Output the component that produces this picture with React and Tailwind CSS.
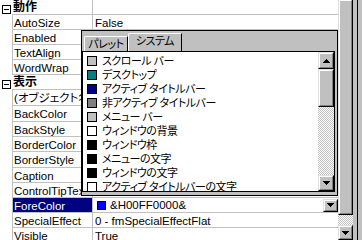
const rows = [
  { group: '動作', h: 'h-[15px]' },
  { name: 'AutoSize', value: 'False', h: 'h-[15px]' },
  { name: 'Enabled', h: 'h-[15px]' },
  { name: 'TextAlign', h: 'h-[15px]' },
  { name: 'WordWrap', h: 'h-[15px]' },
  { group: '表示', h: 'h-[15px]' },
  { name: '(オブジェクト名)', h: 'h-[16px]' },
  { name: 'BackColor', h: 'h-[16px]' },
  { name: 'BackStyle', h: 'h-[15px]' },
  { name: 'BorderColor', h: 'h-[15px]' },
  { name: 'BorderStyle', h: 'h-[16px]' },
  { name: 'Caption', h: 'h-[15px]' },
  { name: 'ControlTipText', h: 'h-[15px]' },
  { name: 'ForeColor', value: '&H00FF0000&', selected: true, h: 'h-[15px]' },
  { name: 'SpecialEffect', value: '0 - fmSpecialEffectFlat', h: 'h-[15px]' },
  { name: 'Visible', value: 'True', h: 'flex-1' },
]

const sysColors = [
  { label: 'スクロール バー', color: 'bg-[#c0c0c0]' },
  { label: 'デスクトップ', color: 'bg-[#008080]' },
  { label: 'アクティブ タイトルバー', color: 'bg-[#000080]' },
  { label: '非アクティブ タイトルバー', color: 'bg-[#808080]' },
  { label: 'メニュー バー', color: 'bg-[#c0c0c0]' },
  { label: 'ウィンドウの背景', color: 'bg-white' },
  { label: 'ウィンドウ枠', color: 'bg-black' },
  { label: 'メニューの文字', color: 'bg-black' },
  { label: 'ウィンドウの文字', color: 'bg-black' },
  { label: 'アクティブ タイトルバーの文字', color: 'bg-white' },
]

function Arrow({ up }) {
  return (
    <svg width="7" height="4" viewBox="0 0 7 4" shapeRendering="crispEdges">
      {up ? (
        <path d="M3 0h1v1h1v1h1v1h1v1H0V3h1V2h1V1h1z" fill="black" />
      ) : (
        <path d="M0 0h7v1H6v1H5v1H4v1H3V3H2V2H1V1H0z" fill="black" />
      )}
    </svg>
  )
}

// win95 style raised box
function Raised({ className = '', children }) {
  return (
    <div className={`border border-t-[#dfdfdf] border-l-[#dfdfdf] border-r-black border-b-black bg-[#c0c0c0] ${className}`}>
      <div className="w-full h-full border border-t-white border-l-white border-r-[#808080] border-b-[#808080] flex items-center justify-center">
        {children}
      </div>
    </div>
  )
}

function Minus() {
  return (
    <div className="w-[9px] h-[9px] border border-black bg-white flex items-center justify-center">
      <div className="w-[5px] h-[1px] bg-black" />
    </div>
  )
}

function Row({ r }) {
  if (r.group) {
    return (
      <div className={`flex shrink-0 ${r.h}`}>
        <div className="w-[12px] flex items-center pl-[2px] pt-[4px]"><Minus /></div>
        <div className="w-[80px] border-b border-[#c0c0c0] pl-[1px] pt-[1px] font-bold text-[12px] leading-[13px]">{r.group}</div>
        <div className="flex-1 border-l border-b border-[#c0c0c0]" />
      </div>
    )
  }
  return (
    <div className={`flex shrink-0 ${r.h}`}>
      <div className="w-[12px]" />
      <div className="w-[81px] border-l border-r border-b border-[#c0c0c0] overflow-hidden whitespace-nowrap">
        <div className={`h-full pl-[1px] pt-[2px] leading-[13px] ${r.selected ? 'bg-[#000080] text-white' : ''}`}>{r.name}</div>
      </div>
      <div className="flex-1 border-b border-[#c0c0c0] flex items-start whitespace-nowrap">
        {r.selected ? (
          <div className="flex items-center w-full h-full pl-[4px]">
            <div className="w-[9px] h-[9px] border border-black bg-[#0000ff]" />
            <span className="ml-[4px] pt-[1px] leading-[13px]">{r.value}</span>
            <Raised className="ml-auto w-[15px] h-[13px]"><Arrow /></Raised>
          </div>
        ) : (
          <span className="pl-[2px] pt-[2px] leading-[13px]">{r.value}</span>
        )}
      </div>
    </div>
  )
}

function ColorPopup() {
  return (
    <div className="absolute left-[81px] top-[30px] w-[257px] h-[166px] border border-black bg-[#c0c0c0] flex flex-col pr-[2px] pb-[3px] text-[11px] tracking-[-0.5px]">
      <div className="h-[20px] shrink-0 flex items-end pl-[2px]">
        <div className="w-[44px] h-[15px] border-t border-l border-r border-t-white border-l-white border-r-black rounded-tl-[2px] flex items-center justify-center">
          パレット
        </div>
        <div className="w-[54px] h-[18px] border-t border-l border-r border-t-white border-l-white border-r-black rounded-tl-[2px] flex items-center justify-center pb-[2px]">
          システム
        </div>
      </div>
      <div className="flex-1 min-h-0 border border-black bg-white flex">
        <div className="flex-1 pt-[2px] overflow-hidden">
          {sysColors.map((c) => (
            <div key={c.label} className="h-[14px] flex items-center pl-[4px] whitespace-nowrap">
              <div className={`w-[10px] h-[10px] border border-black ${c.color}`} />
              <span className="ml-[5px] leading-[14px]">{c.label}</span>
            </div>
          ))}
        </div>
        <div className="w-[16px] flex flex-col">
          <Raised className="h-[17px]"><Arrow up /></Raised>
          <Raised className="h-[38px]" />
          <div className="flex-1 bg-[repeating-conic-gradient(#c0c0c0_0_25%,#ffffff_0_50%)] bg-[length:2px_2px]" />
          <Raised className="h-[16px]"><Arrow /></Raised>
        </div>
      </div>
    </div>
  )
}

export default function App() {
  return (
    <div className="relative w-[362px] h-[240px] overflow-hidden bg-white flex text-black text-[11.5px] font-['Liberation_Sans','Noto_Sans_CJK_JP',sans-serif] [font-feature-settings:'palt']">
      <div className="w-[338px] flex flex-col">
        {rows.map((r, i) => <Row key={i} r={r} />)}
      </div>
      <div className="w-[15px] flex flex-col">
        <Raised className="h-[215px] border-t-0" />
        <div className="h-[10px] bg-[repeating-conic-gradient(#c0c0c0_0_25%,#ffffff_0_50%)] bg-[length:2px_2px]" />
        <Raised className="flex-1"><Arrow /></Raised>
      </div>
      <div className="w-[9px] flex">
        <div className="w-[4px] bg-[#c0c0c0]" />
        <div className="w-[1px] bg-black" />
        <div className="w-[4px] bg-[#c0c0c0]" />
      </div>
      <ColorPopup />
    </div>
  )
}
